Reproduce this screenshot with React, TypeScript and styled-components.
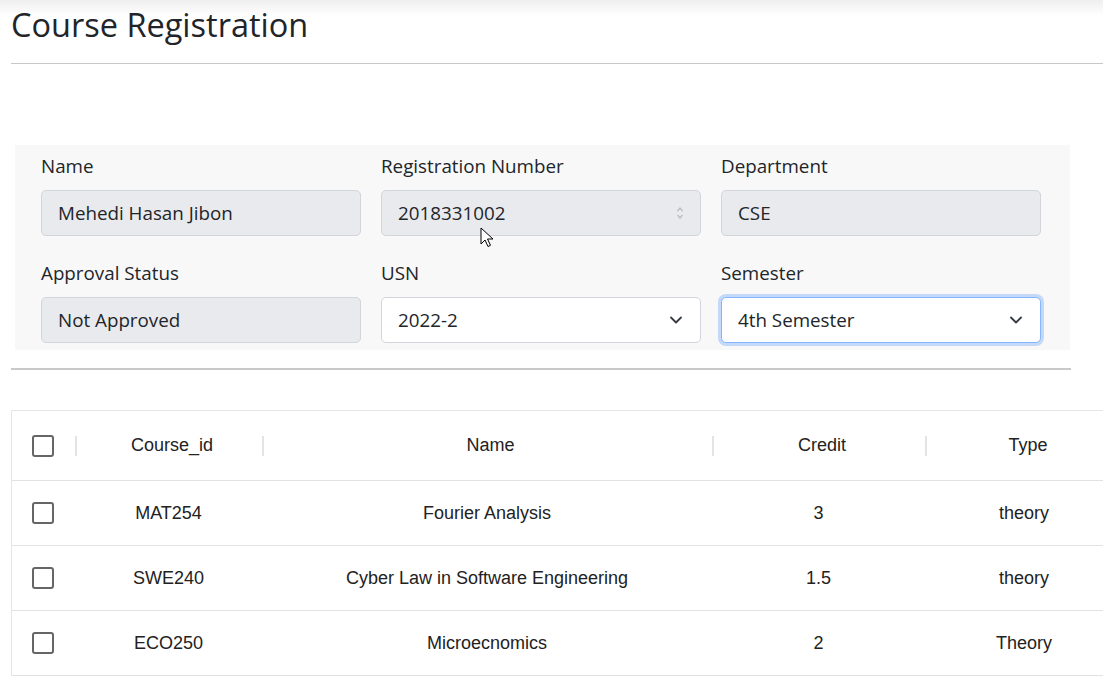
import React from "react";
import styled, { createGlobalStyle } from "styled-components";

const Global = createGlobalStyle`
  html, body { margin: 0; padding: 0; background: #fff; }
  body { font-family: "Open Sans", "Noto Sans", sans-serif; color: #212529; overflow: hidden; }
  * { box-sizing: border-box; }
`;

const Page = styled.div`
  position: relative;
  width: 1103px;
  height: 680px;
  overflow: hidden;
  background: linear-gradient(#efefef 0px, #ffffff 16px);
  padding-left: 11px;
`;

const Title = styled.h1`
  margin: 0;
  height: 63px;
  padding-top: 1px;
  font-size: 32.5px;
  font-weight: 400;
  line-height: 48px;
  color: #212529;
`;

const TopRule = styled.hr`
  margin: 0;
  border: 0;
  border-top: 1px solid #c8c8c8;
  width: 1100px;
`;

const Panel = styled.section`
  margin: 81px 0 0 4px;
  width: 1055px;
  background: #f8f8f9;
  padding: 9px 26px 7px;
  display: grid;
  grid-template-columns: repeat(3, 320px);
  column-gap: 20px;
  row-gap: 25px;
`;

const Field = styled.div`
  display: flex;
  flex-direction: column;
`;

const Label = styled.label`
  font-size: 18.8px;
  line-height: 24px;
  height: 24px;
  margin-bottom: 12px;
  color: #212529;
`;

const Control = styled.div<{ $disabled?: boolean; $focused?: boolean }>`
  position: relative;
  height: 46px;
  display: flex;
  align-items: center;
  padding: 0 16px;
  font-size: 18.8px;
  border-radius: 5px;
  border: 1px solid ${(p) => (p.$focused ? "#86b7fe" : "#d2d5d9")};
  background: ${(p) => (p.$disabled ? "#e9eaed" : "#ffffff")};
  box-shadow: ${(p) => (p.$focused ? "0 0 0 3px rgba(13,110,253,0.22)" : "none")};
  color: #212529;
`;

const ValueText = styled.span`
  flex: 1;
`;

const Chevron = () => (
  <svg width="16" height="16" viewBox="0 0 16 16" fill="none">
    <path d="M3 5.5 8 10.5l5-5" stroke="#343a40" strokeWidth="1.8" strokeLinecap="round" strokeLinejoin="round" />
  </svg>
);

const Spinner = () => (
  <svg width="8" height="16" viewBox="0 0 8 16" fill="none">
    <path d="M1.5 6 4 3l2.5 3" stroke="#b8babd" strokeWidth="1.2" />
    <path d="M1.5 10 4 13l2.5-3" stroke="#b8babd" strokeWidth="1.2" />
  </svg>
);

const Cursor = styled.svg`
  position: absolute;
  left: 480px;
  top: 227px;
`;

const MidRule = styled.hr`
  margin: 18px 0 0;
  border: 0;
  border-top: 2px solid #c9c9c9;
  width: 1060px;
`;

const Table = styled.div`
  margin-top: 40px;
  width: 1130px;
  border-top: 1px solid #e6e6e6;
  border-left: 1px solid #e6e6e6;
  font-family: "Liberation Sans", Arial, sans-serif;
  font-size: 18px;
  color: #222;
`;

const Row = styled.div<{ $head?: boolean }>`
  display: grid;
  grid-template-columns: 63px 187px 450px 213px 216px;
  height: ${(p) => (p.$head ? "70px" : "65px")};
  border-bottom: 1px solid #e2e2e2;
  align-items: center;
`;

const Cell = styled.div<{ $sep?: boolean; $shift?: number }>`
  position: relative;
  height: 100%;
  display: flex;
  align-items: center;
  justify-content: center;
  padding-left: ${(p) => Math.max(p.$shift ?? 0, 0)}px;
  padding-right: ${(p) => Math.max(-(p.$shift ?? 0), 0)}px;
  &::before {
    content: "";
    display: ${(p) => (p.$sep ? "block" : "none")};
    position: absolute;
    left: 0;
    top: 50%;
    width: 2px;
    height: 20px;
    margin-top: -10px;
    background: #e4e4e4;
  }
`;

const CheckCell = styled.div`
  height: 100%;
  display: flex;
  align-items: center;
  padding-left: 20px;
`;

const Box = styled.span`
  width: 22px;
  height: 22px;
  border: 2px solid #666;
  border-radius: 3px;
  background: #fff;
`;

const courses = [
  { id: "MAT254", name: "Fourier Analysis", credit: "3", type: "theory" },
  { id: "SWE240", name: "Cyber Law in Software Engineering", credit: "1.5", type: "theory" },
  { id: "ECO250", name: "Microecnomics", credit: "2", type: "Theory" },
];

export default function App() {
  return (
    <>
      <Global />
      <Page>
        <Title>Course Registration</Title>
        <TopRule />
        <Panel>
          <Field>
            <Label>Name</Label>
            <Control $disabled>
              <ValueText>Mehedi Hasan Jibon</ValueText>
            </Control>
          </Field>
          <Field>
            <Label>Registration Number</Label>
            <Control $disabled>
              <ValueText>2018331002</ValueText>
              <Spinner />
            </Control>
          </Field>
          <Field>
            <Label>Department</Label>
            <Control $disabled>
              <ValueText>CSE</ValueText>
            </Control>
          </Field>
          <Field>
            <Label>Approval Status</Label>
            <Control $disabled>
              <ValueText>Not Approved</ValueText>
            </Control>
          </Field>
          <Field>
            <Label>USN</Label>
            <Control>
              <ValueText>2022-2</ValueText>
              <Chevron />
            </Control>
          </Field>
          <Field>
            <Label>Semester</Label>
            <Control $focused>
              <ValueText>4th Semester</ValueText>
              <Chevron />
            </Control>
          </Field>
        </Panel>
        <MidRule />
        <Table>
          <Row $head>
            <CheckCell>
              <Box />
            </CheckCell>
            <Cell $sep $shift={7}>Course_id</Cell>
            <Cell $sep $shift={7}>Name</Cell>
            <Cell $sep $shift={7}>Credit</Cell>
            <Cell $sep $shift={-10}>Type</Cell>
          </Row>
          {courses.map((c) => (
            <Row key={c.id}>
              <CheckCell>
                <Box />
              </CheckCell>
              <Cell>{c.id}</Cell>
              <Cell>{c.name}</Cell>
              <Cell>{c.credit}</Cell>
              <Cell $shift={-18}>{c.type}</Cell>
            </Row>
          ))}
        </Table>
        <Cursor width="14" height="21" viewBox="0 0 14 21">
          <path d="M1 1v16l4-4 3 6.5 2.5-1.2-3-6.3H13L1 1z" fill="#fff" stroke="#000" strokeWidth="1" strokeLinejoin="round" />
        </Cursor>
      </Page>
    </>
  );
}
